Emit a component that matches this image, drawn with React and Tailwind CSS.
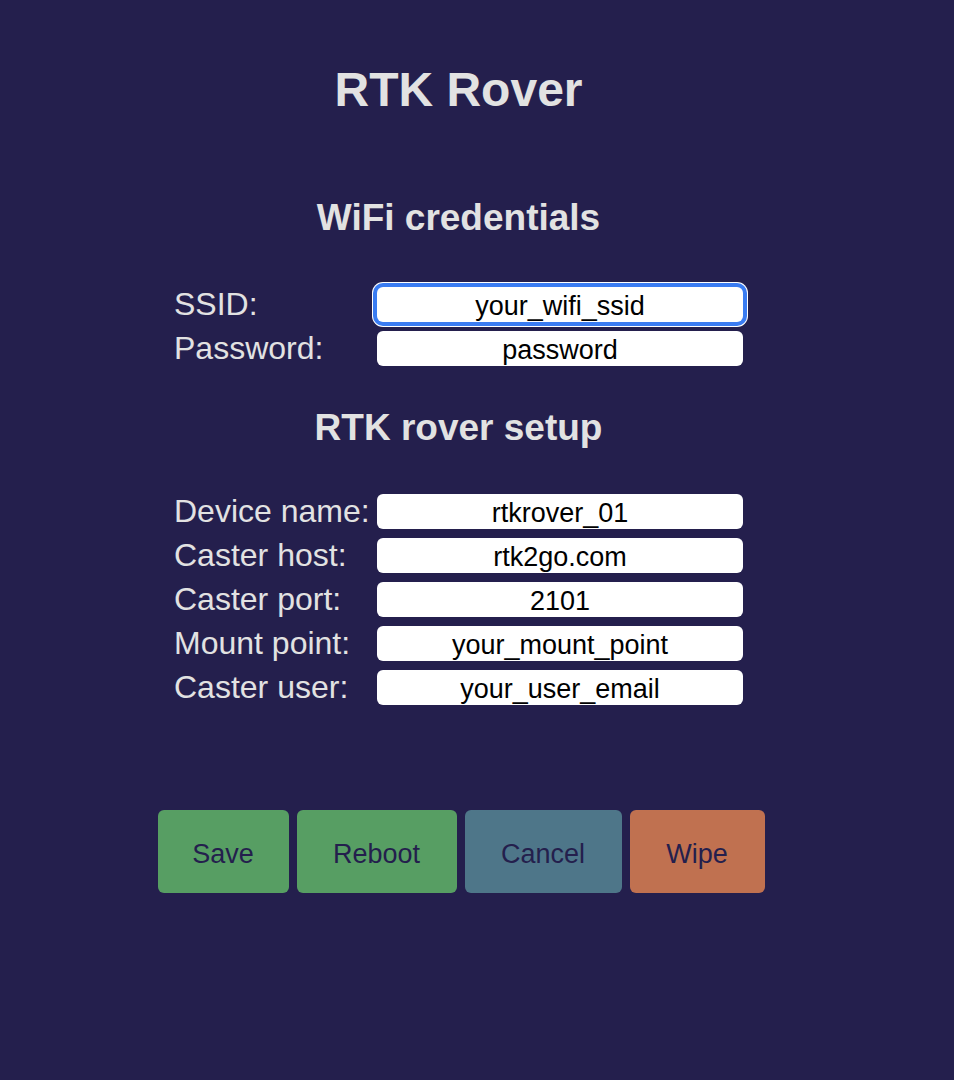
import React from "react";

const wifiFields = [
  { label: "SSID:", value: "your_wifi_ssid", focused: true },
  { label: "Password:", value: "password" },
];

const roverFields = [
  { label: "Device name:", value: "rtkrover_01" },
  { label: "Caster host:", value: "rtk2go.com" },
  { label: "Caster port:", value: "2101" },
  { label: "Mount point:", value: "your_mount_point" },
  { label: "Caster user:", value: "your_user_email" },
];

function FieldRow({ label, value, focused }) {
  return (
    <div className="flex h-[44px] items-center">
      <label className="w-[203px] pb-[1px] text-[32px] leading-[36px] text-[#e2e2e2]">
        {label}
      </label>
      <input
        type="text"
        defaultValue={value}
        className={
          "h-[35px] w-[366px] rounded-[6px] bg-white pt-[4px] text-center text-[27px] leading-[31px] text-black outline-none " +
          (focused ? "shadow-[0_0_0_4px_#3a7cf2,0_0_0_5px_#ffffff]" : "")
        }
      />
    </div>
  );
}

export default function App() {
  const btn = "h-[83px] rounded-[6px] pt-[5px] text-[27px] text-[#241f4d] flex items-center justify-center";

  return (
    <div className="min-h-screen bg-[#241f4d] font-['Liberation_Sans',Arial,sans-serif]">
      <div className="w-[917px] flex flex-col items-center">
        <h1 className="mt-[62px] text-[48px] leading-[56px] font-bold text-[#e2e2e2]">RTK Rover</h1>

        <h2 className="mt-[79px] text-[37px] leading-[42px] font-bold text-[#e2e2e2]">WiFi credentials</h2>
        <div className="mt-[43px] flex flex-col">
          {wifiFields.map((f) => (
            <FieldRow key={f.label} {...f} />
          ))}
        </div>

        <h2 className="mt-[37px] text-[37px] leading-[42px] font-bold text-[#e2e2e2]">RTK rover setup</h2>
        <div className="mt-[40px] flex flex-col">
          {roverFields.map((f) => (
            <FieldRow key={f.label} {...f} />
          ))}
        </div>

        <div className="mt-[101px] flex gap-[8px] pl-[5px]">
          <button className={btn + " w-[131px] bg-[#579e63]"}>Save</button>
          <button className={btn + " w-[160px] bg-[#579e63]"}>Reboot</button>
          <button className={btn + " w-[157px] bg-[#4e7689]"}>Cancel</button>
          <button className={btn + " w-[135px] bg-[#c07150]"}>Wipe</button>
        </div>
      </div>
    </div>
  );
}
